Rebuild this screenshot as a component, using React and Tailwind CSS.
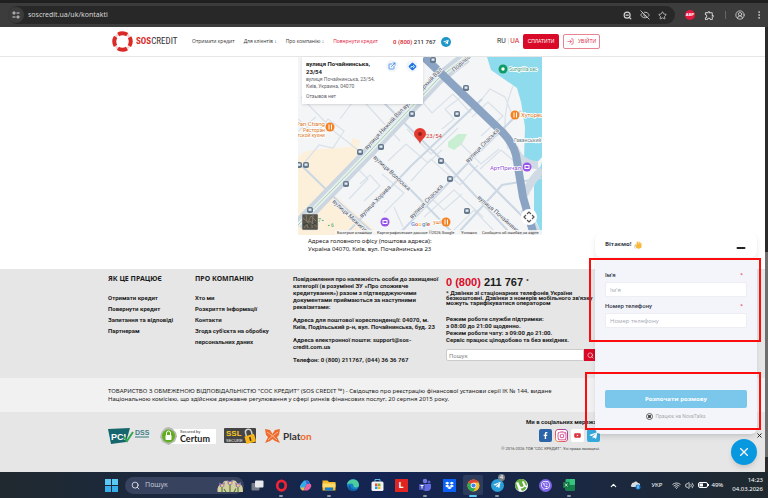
import {
  ChevronUp,
  CircleUserRound,
  EllipsisVertical,
  ExternalLink,
  EyeOff,
  LogIn,
  Minus,
  Search,
  Star,
  Volume2,
  Wifi,
  X,
  ZoomOut,
} from "lucide-react";
import {
  FaDropbox,
  FaFacebookF,
  FaInstagram,
  FaTelegramPlane,
  FaViber,
  FaYoutube,
} from "react-icons/fa";
import { MdOutlineExtension } from "react-icons/md";
import { SiUtorrent } from "react-icons/si";

const howItWorks = [
  "Отримати кредит",
  "Повернути кредит",
  "Запитання та відповіді",
  "Партнерам",
];
const aboutCompany = [
  "Хто ми",
  "Розкриття інформації",
  "Контакти",
  "Згода суб'єкта на обробку персональних даних",
];

const BrowserBar = () => {
  return (
    <div className="flex items-center border-t-3 border-[#202020] bg-[#3c3c3c] pl-2 pr-1 h-[27px] text-[#d5d5d5]">
      <div className="flex flex-1 items-center h-[18px] rounded-full bg-[#282828] pr-2">
        <button
          aria-label="Site settings"
          className="flex items-center justify-center w-4 h-4 rounded-full bg-[#3c3c3c]"
        >
          <svg width="8" height="8" viewBox="0 0 16 16" fill="none" stroke="#d5d5d5" strokeWidth="2">
            <circle cx="4" cy="4" r="2.2" />
            <path d="M9 4h6M1 12h6" />
            <circle cx="12" cy="12" r="2.2" />
          </svg>
        </button>
        <input
          aria-label="Address"
          defaultValue="soscredit.ua/uk/kontakti"
          className="flex-1 min-w-0 ml-1 bg-transparent text-[7px] outline-none font-['Noto_Sans',sans-serif]"
        />
        <div className="flex items-center gap-2">
          <ZoomOut size={9} strokeWidth={3} />
          <EyeOff size={10} />
          <Star size={9} />
        </div>
      </div>
      <div className="flex items-center ml-[10px]">
        <span className="flex items-center justify-center w-[10px] h-[10px] rounded-full bg-[#e8173d] text-white font-bold text-[4px]">
          ABP
        </span>
        <MdOutlineExtension size={11} className="ml-[9px]" />
        <span className="w-px h-2 bg-[#666] ml-[10px]"></span>
        <CircleUserRound size={10} className="ml-[9px]" />
        <EllipsisVertical size={10} className="ml-[9px]" />
      </div>
    </div>
  );
};

const Logo = () => {
  return (
    <a href="#" className="flex items-center gap-[3px] w-[80px]">
      <svg width="21" height="21" viewBox="0 0 42 42" fill="none">
        <circle cx="21" cy="21" r="16.5" stroke="#f3d5d4" strokeWidth="5" />
        <circle
          cx="21"
          cy="21"
          r="16.5"
          stroke="#da2a28"
          strokeWidth="8"
          strokeDasharray="19 6.92"
          strokeDashoffset="9.5"
        />
      </svg>
      <span className="text-[9px] leading-none text-[#333] font-['Liberation_Sans_Narrow','Roboto_Condensed',sans-serif]">
        <b className="text-[#da2a28]">SOS</b>CREDIT
      </span>
    </a>
  );
};

const Header = () => {
  return (
    <header className="flex items-center h-[30px] pl-28 border-b border-[#e6e6e6] bg-white text-[6px] text-[#333] whitespace-nowrap">
      <Logo />
      <nav className="flex items-center justify-between w-[186px] text-[5px] font-medium font-['Open_Sans',sans-serif]">
        <a href="#">Отримати кредит</a>
        <a href="#">Для клієнтів ↓</a>
        <a href="#">Про компанію ↓</a>
        <a href="#" className="text-[#e0203c]">Повернути кредит</a>
      </nav>
      <a href="#" className="ml-[15px] font-medium w-[44px] font-['Roboto',sans-serif]">
        <span className="text-[#d8232a]">0 (800)</span> 211 767
      </a>
      <a
        href="#"
        aria-label="Telegram"
        className="flex items-center justify-center w-[10px] h-[10px] ml-1 rounded-full bg-[#1e96c8] text-white"
      >
        <FaTelegramPlane size={6} />
      </a>
      <div className="ml-[46px] w-[22px] text-[7px] font-['Roboto',sans-serif]">
        <a href="#">RU</a> <span className="text-[#ccc]">|</span>
        <a href="#" className="pl-px text-[#d8232a]">UA</a>
      </div>
      <button className="ml-1 w-9 h-[15px] rounded-xs bg-[#d90a28] text-[5px] font-medium text-white">
        СПЛАТИТИ
      </button>
      <button className="flex items-center justify-center gap-1 ml-1 w-[37px] h-[15px] rounded-xs border border-[#e88490] text-[5px] text-[#d8324a]">
        <LogIn size={7} />
        УВІЙТИ
      </button>
    </header>
  );
};

const stops = [
  [135, 3],
  [168, 31],
  [114, 57],
  [159, 57],
  [83, 90],
  [62, 95],
  [8, 108],
  [1, 108],
  [143, 104],
  [48, 127],
  [152, 122],
  [12, 153],
  [169, 154],
];

const streets = [
  [69, 93, -47, "вулиця Нижній Вал"],
  [107, 53, -47, "вулиця Верхній Вал"],
  [75, 101, 43, "вулиця Волоська"],
  [34, 145, 43, "вулиця Межигірська"],
  [64, 161, -46, "вулиця Хорива"],
  [114, 162, -46, "вулиця Спаська"],
  [170, 106, -46, "вулиця Спаська"],
  [179, 141, 41, "вулиця Почайнинська"],
  [156, 15, -41, "Подільська"],
];

const MapDrawing = () => {
  return (
    <svg
      viewBox="0 0 244 178"
      width="244"
      height="178"
      className="block"
      fontFamily="Roboto, sans-serif"
      fontSize="6"
    >
      <rect width="244" height="178" fill="#f4f5f7" />
      <path d="M0 100L20 84 55 81 62 84 56 108 0 160zM20 154L36 138 82 178H0v-22z" fill="#fcf0da" />
      <path d="M0 60L34 48 56 76 52 90 22 92 0 96z" fill="#f4f5f7" />
      <path d="M150 85l10-8h9l-5 10-8 6-6-3z" fill="#c9efd2" />
      <path d="M189 0l4 13 26 18 4 14 4 25-1 32 9 8 9-10V0z" fill="#8edbee" />
      <path d="M244 105l-8 24v30l8 19z" fill="#8edbee" />
      {/* minor streets */}
      <g fill="none" stroke="#d9e1e9" strokeWidth="1.2">
        <path d="M0 62l17 16 13-16 16 12-11 17-14-3-14 17M3 40l34 35 28 22M0 74l18-14M42 62l18-24 42 46" />
        <path d="M144 72l12-10-9-10 20-15 13 10 12-15 15 8 8 20M174 60l16-15 15 14-22 20M160 84l23 23 18-15M120 40l14 16 21-19 18 19M109 72l24 25 27-26" />
        <path d="M90 104l18-17 22 19 14-13M113 124l20-22 29 26 18-20M84 117l22 19-20 20M126 160l30-27 29 27M58 110l12 12-19 20M96 150l9 20M151 178l25-25 23 24M182 112l21-19 13 11" />
        <path d="M215 29q-13 31-5 63M132 140l14 13 18-16M62 127l10-9 10 11-16 15" />
      </g>
      <g fill="none" stroke="#cbd7e3" strokeWidth="2">
        <path d="M0 105l44 43 34 30M78 38l68 67 66 71M73 96l34 31 47 48M47 178l67-70 70-66M100 178l68-70 55-54M160 176l44-48 40-7M170 105l70 70M106 55l-26 25" />
      </g>
      <path d="M0 168L72 94 140 22 168 0" fill="none" stroke="#cbd6e1" strokeWidth="12" />
      <path d="M0 168L72 94 140 22 168 0" fill="none" stroke="#e9f1ef" strokeWidth="4" />
      <path d="M0 168L72 94 140 22 168 0" fill="none" stroke="#aacdb6" strokeWidth="1" />
      <path d="M216 90q6 18 24 18M225 140q10-20 19-27M226 152l14 26" fill="none" stroke="#d0dae4" strokeWidth="8" />
      <path d="M126 0L200 71q14 12 18 27l7 42 11 38" fill="none" stroke="#8ca4c3" strokeWidth="8" />
      <g fill="#55616f" stroke="#f3f4f6" strokeWidth="1.5" paintOrder="stroke">
        {streets.map(([x, y, r, name], i) => (
          <text key={i} transform={`translate(${x} ${y}) rotate(${r})`}>
            {name}
          </text>
        ))}
      </g>
      {stops.map(([x, y], i) => (
        <g key={i}>
          <rect x={x - 3} y={y - 3} width="6" height="6" rx="1.8" fill="#64798d" />
          <rect x={x - 1.5} y={y - 1.5} width="3" height="2.3" fill="#e5ebf0" />
        </g>
      ))}
      <g stroke="#fff" strokeWidth="1.5" paintOrder="stroke">
        <g fill="#dc7a24">
          <text x="27" y="69" textAnchor="end">Pan Chang</text>
          <text x="27" y="75" fontSize="5" textAnchor="end">Ресторан</text>
          <text x="27" y="80" fontSize="5" textAnchor="end">атской кухни</text>
          <text x="223" y="60">Хуторець</text>
          <text x="143" y="167" fontSize="5" textAnchor="end">уші</text>
        </g>
        <text x="211" y="14" fontSize="5" fill="#3d9c85">Sungrilla sec</text>
        <text x="223" y="113" fill="#9155d6" textAnchor="end">АртПричал</text>
        <text x="216" y="85" fontSize="5" fill="#6e7d88">Гаванський</text>
      </g>
      {[[32, 70], [217, 58], [148, 165]].map(([x, y]) => (
        <g key={x}>
          <circle cx={x} cy={y} r="4.5" fill="#f58220" />
          <path d={`M${x - 1} ${y - 2.5}v5M${x + 1.5} ${y - 2.5}v5`} stroke="#fff" strokeWidth="1" />
        </g>
      ))}
      <circle cx="205" cy="12" r="4.5" fill="#109b64" />
      <circle cx="205" cy="12" r="1.7" fill="#fff" />
      {[[229, 110], [87, 165]].map(([x, y]) => (
        <g key={x}>
          <circle cx={x} cy={y} r="4.5" fill="#9a55e8" />
          <rect x={x - 2} y={y - 1.5} width="4" height="3" fill="none" stroke="#fff" />
        </g>
      ))}
      <path d="M122 87c-1-5-6-6-6-10a6 6 0 0 1 12 0c0 4-5 5-6 10z" fill="#e33b30" />
      <circle cx="122" cy="77" r="2" fill="#98201b" />
      <text x="128" y="81" fill="#d33b31">23/54</text>
      {/* satellite preview */}
      <rect x="4" y="157" width="16" height="16" rx="1" fill="#56534b" stroke="#ddd" strokeWidth="0.5" />
      <path d="M5 161l5 4 3-6 5 5M6 171l6-7 7 6M8 158l2 13M15 158l-1 13" stroke="#867a69" fill="none" />
      <path d="M5 168l4-2 3 4M14 168l4-2" stroke="#344337" fill="none" />
      <text x="113" y="169" fontSize="6" fontWeight="500" stroke="#fff" strokeWidth="1" paintOrder="stroke">
        <tspan fill="#4285f4">G</tspan>
        <tspan fill="#ea4335">o</tspan>
        <tspan fill="#fbbc05">o</tspan>
        <tspan fill="#4285f4">g</tspan>
        <tspan fill="#34a853">l</tspan>
        <tspan fill="#ea4335">e</tspan>
      </text>
      <text x="20" y="165" fontSize="5" fill="#3a9e5c">7 ▪</text>
      <text x="30" y="170" fontSize="5" fill="#3a9e5c">▪ 6</text>
      <circle cx="231" cy="160" r="8" fill="#fff" />
      <path d="M229 157l2-2 2 2M229 163l2 2 2-2M228 158l-2 2 2 2M234 158l2 2-2 2" fill="none" stroke="#555" strokeWidth="1.2" />
      <rect x="37" y="173" width="207" height="5" fill="#f7f7f7" opacity="0.85" />
      <g fontSize="4" fill="#333">
        <text x="39" y="177">Быстрые клавиши</text>
        <text x="79" y="177">Картографические данные ©2026 Google</text>
        <text x="163" y="177">Условия</text>
        <text x="184" y="177">Сообщить об ошибке на карте</text>
      </g>
    </svg>
  );
};

const OfficeMap = () => {
  return (
    <section className="pl-[298px] bg-white">
      <div className="relative w-[244px]">
        <MapDrawing />
        {/* place card over the map */}
        <div className="absolute left-1 top-0 flex w-[121px] h-[47px] bg-white pl-1 pr-[5px] shadow-sm font-['Roboto',sans-serif]">
          <div className="flex-1 min-w-0 text-[5px] leading-[7px] text-[#5f6368] pt-[3px]">
            <p className="text-[6px] leading-2 font-bold text-[#222] whitespace-nowrap">
              вулиця Почайнинська,
              <br />
              23/54
            </p>
            <p className="whitespace-nowrap">
              вулиця Почайнинська, 23/54,
              <br />
              Київ, Украина, 04070
            </p>
            <p className="mt-[3px]">Отзывов нет</p>
          </div>
          <div className="flex gap-2 mt-[3px]">
            <a href="#" aria-label="Open in maps" className="flex items-center justify-center w-3 h-3 rounded-full bg-[#f2f5fa] text-[#1a73e8]">
              <ExternalLink size={8} />
            </a>
            <a href="#" aria-label="Directions" className="flex items-center justify-center w-3 h-3 rounded-full bg-[#f2f5fa]">
              <svg width="9" height="9" viewBox="0 0 18 18">
                <rect x="4" y="4" width="10" height="10" rx="1" transform="rotate(45 9 9)" fill="#1a73e8" stroke="#1a73e8" strokeWidth="2" />
                <path d="M6 12V9h5M10 6l3 3-3 3" fill="none" stroke="#fff" strokeWidth="1.5" />
              </svg>
            </a>
          </div>
        </div>
      </div>
      <p className="pl-[10px] pt-[2px] pb-4 text-[6px] leading-2 text-[#222] font-['Noto_Sans',sans-serif]">
        Адреса головного офісу (поштова адреса):
        <br />
        Україна 04070, Київ, вул. Почайнинська 23
      </p>
    </section>
  );
};

const LinkColumn = ({ title, links }) => {
  return (
    <div className="pt-[5px]">
      <h3 className="text-[7px] leading-[10px] font-bold whitespace-nowrap font-['Noto_Sans',sans-serif]">{title}</h3>
      <ul className="mt-2 leading-[11px]">
        {links.map((link) => (
          <li key={link}>
            <a href="#">{link}</a>
          </li>
        ))}
      </ul>
    </div>
  );
};

const FooterTop = () => {
  return (
    <div className="grid grid-cols-[87px_79px_148px_160px] pl-[108px] h-[109px] bg-[#e6e6e6] text-[6px] font-bold text-[#1c1c1c] font-['Roboto',sans-serif]">
      <LinkColumn title="ЯК ЦЕ ПРАЦЮЄ" links={howItWorks} />
      <LinkColumn title="ПРО КОМПАНІЮ" links={aboutCompany} />
      <div className="flex flex-col gap-[6px] ml-[19px] pt-[6px] leading-[7px] whitespace-nowrap">
        <p>
          Повідомлення про належність особи до захищеної
          <br />
          категорії (в розумінні ЗУ «Про споживче
          <br />
          кредитування») разом з підтверджуючими
          <br />
          документами приймаються за наступними
          <br />
          реквізитами:
        </p>
        <p>
          Адреса для поштової кореспонденції: 04070, м.
          <br />
          Київ, Подільський р-н, вул. Почайнинська, буд. 23
        </p>
        <p>
          Адреса електронної пошти: support@sos-
          <br />
          credit.com.ua
        </p>
        <p>Телефон: 0 (800) 211767, (044) 36 36 767</p>
      </div>
      <div className="ml-6 pt-[6px] whitespace-nowrap">
        <p className="text-[11px] leading-[14px] font-['Liberation_Sans',sans-serif]">
          <span className="text-[#d90a28]">0 (800)</span> 211 767{" "}
          <sup className="text-[6px]">*</sup>
        </p>
        <p className="leading-[5px] mt-px">
          * Дзвінки зі стаціонарних телефонів України
          <br />
          безкоштовні. Дзвінки з номерів мобільного зв'язку
          <br />
          можуть тарифікуватися оператором
        </p>
        <p className="leading-[7px] mt-[10px]">
          Режим роботи служби підтримки:
          <br />
          з 08:00 до 21:00 щоденно.
          <br />
          Режим роботи чату: з 09:00 до 21:00.
          <br />
          Сервіс працює цілодобово та без вихідних.
        </p>
        <form className="flex mt-[6px] w-[151px]">
          <input
            aria-label="Пошук"
            placeholder="Пошук"
            className="flex-1 min-w-0 h-3 rounded-l-xs border border-[#ccc] bg-white px-[2px] text-[6px] font-normal placeholder:text-[#888]"
          />
          <button
            type="button"
            aria-label="Шукати"
            className="flex items-center justify-center w-[13px] h-3 bg-[#d90a28] text-white"
          >
            <Search size={7} />
          </button>
        </form>
      </div>
    </div>
  );
};

const PaymentLogos = () => {
  return (
    <div className="flex items-center gap-2">
      <svg width="44" height="18" viewBox="0 0 44 18">
        <path d="M0 2l22-1-4 14-15 2z" fill="#16676d" />
        <text x="3" y="13" fontSize="9" fontWeight="bold" fill="#fff" fontFamily="Liberation Sans">PCI</text>
        <path d="M16 10l3 4 6-9" stroke="#35a852" strokeWidth="2" fill="none" />
        <text x="27" y="8" fontSize="7" fontWeight="bold" fill="#3f7f86" fontFamily="Liberation Sans">DSS</text>
        <path d="M27 10h14" stroke="#6d9da2" strokeWidth="1.5" />
      </svg>
      <svg width="56" height="18" viewBox="0 0 56 18">
        <rect x="8" y="2" width="48" height="15" rx="1" fill="#fff" />
        <path d="M8.5 0l4 1.500 3.500 4 1 4-2 5-6.500 3.500-6-3-2.500-5 1.500-5 3.500-4z" fill="#b4bab0" />
        <circle cx="8.500" cy="9" r="6.500" fill="#62ad1f" />
        <rect x="5.500" y="8" width="6" height="5" rx="1" fill="#fff" />
        <path d="M6.500 8V6a2 2 0 0 1 4 0v2" stroke="#fff" fill="none" />
        <text x="20" y="6" fontSize="4" fill="#333" fontFamily="Liberation Sans">Secured by</text>
        <text x="20" y="15" fontSize="9" fontWeight="bold" fill="#222" fontFamily="Lato">Certum</text>
      </svg>
      <svg width="32" height="18" viewBox="0 0 32 18">
        <rect y="1" width="32" height="15" rx="1" fill="#454545" />
        <text x="2" y="9" fontSize="8" fontWeight="bold" fill="#f6c928" fontFamily="Liberation Sans">SSL</text>
        <text x="2" y="15" fontSize="4" fill="#eee" fontFamily="Liberation Sans">SECURE</text>
        <g transform="rotate(-15 26 11)">
          <path d="M23 9V5a3 3 0 0 1 6 0v4" stroke="#d0d0d0" strokeWidth="1.500" fill="none" />
          <rect x="21" y="8" width="10" height="8" rx="1" fill="#f8b51b" />
          <path d="M26 10v4" stroke="#443209" strokeWidth="1.500" />
        </g>
      </svg>
      <svg width="52" height="18" viewBox="0 0 52 18">
        <path d="M1 2l5 1 2.500 4L11 3l5-1-1 6-2 2 3 6-5-2-2.500-2L6 14l-5 2 3-6-2-2z" fill="#ee6a2e" />
        <path d="M3 5l5.500 4L14 5M4 13l4.500-4 4.500 4" stroke="#f9b990" fill="none" />
        <text x="19" y="13" fontSize="10" fontWeight="bold" fill="#333" fontFamily="Lato">
          Plat<tspan fill="#f0682c">on</tspan>
        </text>
      </svg>
    </div>
  );
};

const Socials = () => {
  return (
    <div className="mr-[165px] text-right font-['Roboto',sans-serif]">
      <p className="text-[6px] leading-2 font-bold text-[#222]">Ми в соціальних мережах</p>
      <div className="flex justify-end gap-[3px] mt-[3px]">
        <a href="#" aria-label="Facebook" className="flex items-center justify-center size-[13px] rounded-xs bg-[#2c64a8] text-white">
          <FaFacebookF size={7} />
        </a>
        <a href="#" aria-label="Instagram" className="size-[13px] p-px rounded-sm bg-linear-to-tr from-[#f39a2d] via-[#d92c6c] to-[#7a3bbd] text-[#cf2f7c]">
          <span className="flex items-center justify-center size-[11px] rounded-xs bg-white">
            <FaInstagram size={10} />
          </span>
        </a>
        <a href="#" aria-label="YouTube" className="flex items-center justify-center size-[13px] rounded-xs bg-white text-[#d8323a]">
          <FaYoutube size={7} />
        </a>
        <a href="#" aria-label="Telegram" className="flex items-center justify-center size-[13px] rounded-xs bg-[#35a8dc] text-white">
          <FaTelegramPlane size={9} />
        </a>
      </div>
      <p className="mt-1 text-[4px] leading-[5px] text-[#444]">
        © 2016-2026 ТОВ "СОС КРЕДИТ". Усі права захищені.
      </p>
    </div>
  );
};

const ChatWidget = () => {
  return (
    <div className="absolute right-[11px] top-[232px] w-[162px] rounded-md bg-[#f4f5fb] shadow-md overflow-hidden font-['Open_Sans',sans-serif]">
      <div className="flex items-center justify-between h-[25px] px-[10px] rounded-b-md bg-white">
        <h2 className="flex items-center gap-[3px] text-[6px] font-bold text-[#333a48]">
          Вітаємо!
          <svg width="8" height="8" viewBox="0 0 16 16">
            <path d="M5 14c-3-2-2-5-3-7l2-1 2 2-1-6 2-1 2 5V1l2 0 1 6 1-4 2 1v8c-1 3-6 5-10 2z" fill="#f8b83c" />
            <path d="M0 8c0 3 1 5 3 7" stroke="#6fa6c9" fill="none" />
          </svg>
        </h2>
        <button aria-label="Згорнути" className="pt-[6px] text-[#222]">
          <Minus size={12} strokeWidth={4} />
        </button>
      </div>
      <form className="px-[10px] pt-[14px] text-[6px]">
        <label htmlFor="name" className="flex justify-between leading-2 font-medium text-[#333a48] pr-1 font-['Roboto',sans-serif]">
          Ім'я <span className="text-[#e8474f]">*</span>
        </label>
        <input
          id="name"
          placeholder="Ім'я"
          className="block w-full h-[15px] mt-[3px] rounded-xs border border-[#eceef4] bg-white px-1 placeholder:text-[#a4a9b5]"
        />
        <label htmlFor="phone" className="flex justify-between mt-[5px] leading-2 font-medium text-[#333a48] pr-1 font-['Roboto',sans-serif]">
          Номер телефону <span className="text-[#e8474f]">*</span>
        </label>
        <input
          id="phone"
          placeholder="Номер телефону"
          className="block w-full h-[15px] mt-[3px] rounded-xs border border-[#eceef4] bg-white px-1 placeholder:text-[#a4a9b5]"
        />
        <button
          type="button"
          className="block w-full h-[18px] mt-[62px] rounded-xs bg-[#7ac7eb] text-[6px] font-bold text-white"
        >
          Розпочати розмову
        </button>
        <p className="flex items-center justify-center gap-[2px] mt-1 mb-[14px] leading-2 text-[5px] text-[#aaa] font-['Roboto',sans-serif]">
          <svg width="7" height="7" viewBox="0 0 14 14" fill="none" stroke="#333" strokeWidth="1.5">
            <circle cx="7" cy="7" r="6" />
            <circle cx="7" cy="7" r="2" fill="#333" />
            <path d="M4 4l6 6M10 4l-6 6" />
          </svg>
          Працює на NovaTalks
        </p>
      </form>
    </div>
  );
};

const TaskIcon = ({ children, running, active }) => {
  return (
    <button className="relative flex items-center justify-center w-6 h-6">
      {children}
      {running && <span className="absolute bottom-0 w-1 h-[2px] rounded-full bg-[#8b93a1]"></span>}
      {active && <span className="absolute bottom-0 w-2 h-[2px] rounded-full bg-[#5cc3f2]"></span>}
    </button>
  );
};

const Taskbar = () => {
  return (
    <footer className="flex items-center h-[26px] pl-[105px] pr-[5px] bg-linear-to-r from-[#20292f] via-[#142453] to-[#20292f] text-white font-['Noto_Sans',sans-serif]">
      <button aria-label="Start" className="grid grid-cols-2 gap-px w-[13px]">
        <span className="size-[6px] bg-[#5ac8f5]"></span>
        <span className="size-[6px] bg-[#5ac8f5]"></span>
        <span className="size-[6px] bg-[#35aeea]"></span>
        <span className="size-[6px] bg-[#35aeea]"></span>
      </button>
      <label className="flex items-center w-[119px] h-[17px] ml-[7px] pl-[6px] rounded-full bg-[#37425e]">
        <Search size={9} />
        <input
          placeholder="Пошук"
          aria-label="Пошук"
          className="flex-1 min-w-0 ml-[5px] text-[7px] placeholder:text-[#c0c6d4]"
        />
        <svg width="28" height="15" viewBox="0 0 56 30">
          <path d="M3 28Q2 12 13 12 16 1 27 8 38 0 43 11q12 0 11 17z" fill="#d6d0a1" />
          <path d="M12 28V15M28 28V11M44 28V15M20 28l-4-6M36 28l4-7" stroke="#568444" strokeWidth="2.500" />
          <path d="M6 9l6 3 6-4-2 10H8zM22 4l6 3 6-4-2 10h-8zM38 9l6 3 6-4-2 10h-8z" fill="#9877c2" />
          <path d="M10 13h5v4h-5zM26 8h5v4h-5zM42 13h5v4h-5z" fill="#f1d469" />
        </svg>
      </label>
      <div className="flex items-center ml-[1px]">
        <TaskIcon>
          <svg width="13" height="13" viewBox="0 0 26 26">
            <rect x="1" y="8" width="16" height="15" rx="2" fill="#777d86" />
            <rect x="8" y="3" width="17" height="14" rx="2" fill="#e8e9eb" />
          </svg>
        </TaskIcon>
        <TaskIcon running>
          <svg width="13" height="13" viewBox="0 0 26 26">
            <ellipse cx="13" cy="13" rx="8.500" ry="9.500" fill="none" stroke="#ef2334" strokeWidth="5.500" />
          </svg>
        </TaskIcon>
        <TaskIcon>
          <svg width="13" height="13" viewBox="0 0 26 26">
            <path d="M10 3h7q3 0 4 4l1 3-7 1-5 11H7q-4 0-5-4t2-8 6-7z" fill="#36a9e8" />
            <path d="M16 9h5q5 1 3 7t-7 7H9l3-6z" fill="#e65f9e" />
            <path d="M3 17h8l-2 6H6z" fill="#f5b93e" />
            <path d="M14 3h4l3 7h-6z" fill="#375fd7" />
          </svg>
        </TaskIcon>
        <TaskIcon running>
          <svg width="14" height="13" viewBox="0 0 28 26">
            <path d="M1 3h10l3 3h13v17H1z" fill="#f5b92e" />
            <path d="M1 9h26v8H1z" fill="#ffda69" />
            <path d="M6 17h16v6H6z" fill="#167dd0" />
          </svg>
        </TaskIcon>
        <TaskIcon>
          <svg width="14" height="14" viewBox="0 0 28 28">
            <circle cx="14" cy="14" r="12" fill="#1581cb" />
            <path d="M2 13C4 0 25-1 26 14q0 5-7 5-5 0-4-4Q15 8 2 13z" fill="#4bcd9d" />
            <path d="M9 14q-2 10 14 9-8 6-16 1-5-8 2-10z" fill="#0e5ba2" />
          </svg>
        </TaskIcon>
        <TaskIcon>
          <svg width="13" height="14" viewBox="0 0 26 28">
            <path d="M8 7V3h10v4" stroke="#5dbbe9" strokeWidth="2" fill="none" />
            <rect x="1" y="7" width="24" height="19" rx="3" fill="#f0f2f5" />
            <path d="M8 11h5v5H8z" fill="#eb5138" />
            <path d="M14 11h5v5h-5z" fill="#7ab43c" />
            <path d="M8 17h5v5H8z" fill="#289bdc" />
            <path d="M14 17h5v5h-5z" fill="#f5b825" />
          </svg>
        </TaskIcon>
        <TaskIcon>
          <span className="flex items-center justify-center size-[13px] bg-[#df2422] text-[9px] font-bold">L</span>
        </TaskIcon>
        <TaskIcon running>
          <svg width="14" height="14" viewBox="0 0 28 28">
            <circle cx="14" cy="6" r="4.500" fill="#7378df" />
            <circle cx="22" cy="8" r="3" fill="#5b63ce" />
            <path d="M7 12h19v8q-2 7-9 6-9 0-10-8z" fill="#646de0" />
            <rect x="2" y="12" width="12" height="12" rx="2" fill="#4750b9" />
            <path d="M5 15h6M8 15v6" stroke="#fff" strokeWidth="2" />
          </svg>
        </TaskIcon>
        <TaskIcon>
          <span className="flex items-center justify-center size-[13px] bg-[#0b61f6]">
            <FaDropbox size={9} />
          </span>
        </TaskIcon>
        <TaskIcon active>
          <span className="flex items-center justify-center size-5 rounded-xs bg-white/10">
            <svg width="13" height="13" viewBox="0 0 28 28">
              <circle cx="14" cy="14" r="13" fill="#f5c02c" />
              <path d="M14 14L2.700 7.500A13 13 0 0 1 25.300 7.500H14z" fill="#e04335" />
              <path d="M14 14L2.700 7.500A13 13 0 0 0 14 27l5-10z" fill="#30a653" />
              <circle cx="14" cy="14" r="6" fill="#fff" />
              <circle cx="14" cy="14" r="4.500" fill="#4083ed" />
            </svg>
          </span>
        </TaskIcon>
        <TaskIcon running>
          <span className="flex items-center justify-center size-[13px] rounded-full bg-[#2a9fd8]">
            <FaTelegramPlane size={8} />
          </span>
          <span className="absolute top-px right-1 flex items-center justify-center size-[7px] rounded-full bg-[#7d858b] text-[6px]">4</span>
        </TaskIcon>
        <TaskIcon>
          <span className="flex items-center justify-center size-[13px] rounded-full bg-white text-[#62ad3d]">
            <SiUtorrent size={12} />
          </span>
        </TaskIcon>
        <TaskIcon>
          <span className="flex items-center justify-center size-[13px] rounded-full bg-[#7c62e8]">
            <FaViber size={9} />
          </span>
        </TaskIcon>
        <TaskIcon running>
          <svg width="14" height="14" viewBox="0 0 28 28">
            <rect x="7" y="2" width="19" height="23" rx="2" fill="#2bb673" />
            <path d="M16 2h8q2 0 2 2v9H16z" fill="#38c481" />
            <path d="M7 14h19v9q0 2-2 2H7z" fill="#15804a" />
            <rect x="2" y="8" width="13" height="12" rx="1" fill="#117642" />
            <path d="M6 11l5 6M11 11l-5 6" stroke="#fff" strokeWidth="1.500" />
          </svg>
        </TaskIcon>
      </div>
      <div className="flex items-center ml-auto text-[6px]">
        <ChevronUp size={9} strokeWidth={3} />
        <svg width="11" height="10" viewBox="0 0 22 20" className="ml-3">
          <path d="M4 14Q0 12 3 9q0-4 5-4 4-4 8 1 5 0 4 5l-3 3z" fill="#d7dce0" />
          <circle cx="16" cy="14" r="5" fill="#1683d8" />
          <path d="M16 12v5M16 10v1" stroke="#fff" strokeWidth="1.500" />
        </svg>
        <span className="ml-[10px]">УКР</span>
        <Wifi size={9} className="ml-[10px]" />
        <Volume2 size={9} className="ml-1" />
        <svg width="11" height="8" viewBox="0 0 22 16" className="ml-1">
          <rect x="1" y="3" width="18" height="10" rx="3" fill="none" stroke="#fff" strokeWidth="2" />
          <path d="M3 5h7v6H3zM20 6h2v4h-2z" fill="#fff" />
        </svg>
        <span className="ml-[2px]">49%</span>
        <div className="ml-[9px] leading-[9px] text-right">
          14:23
          <br />
          04.03.2026
        </div>
      </div>
    </footer>
  );
};

const App = () => {
  return (
    <div className="relative flex flex-col min-h-screen bg-[#e6e6e6] font-['Liberation_Sans',Arial,sans-serif]">
      <BrowserBar />
      <div className="flex flex-1">
        <main className="flex flex-col flex-1 min-w-0">
          <Header />
          <OfficeMap />
          <FooterTop />
          <div className="h-[34px] pl-[108px] pt-[9px] bg-[#f1f1f1] text-[6px] leading-2 text-[#222] whitespace-nowrap overflow-hidden font-['Noto_Sans',sans-serif]">
            ТОВАРИСТВО З ОБМЕЖЕНОЮ ВІДПОВІДАЛЬНІСТЮ "СОС КРЕДИТ" (SOS CREDIT ™) - Свідоцтво про реєстрацію фінансової установи серії ІК № 144, видане
            <br />
            Національною комісією, що здійснює державне регулювання у сфері ринків фінансових послуг, 20 серпня 2015 року.
          </div>
          <div className="flex justify-between pl-[108px] pt-[6px] flex-1">
            <div className="pt-[9px]">
              <PaymentLogos />
            </div>
            <Socials />
          </div>
        </main>
        <div className="w-[3px] bg-[#2b2b2b] pt-[225px]">
          <div className="h-[205px] bg-[#6e6e6e]"></div>
        </div>
      </div>
      <Taskbar />

      <ChatWidget />
      {/* highlighted areas of the chat form */}
      <div className="absolute right-[7px] top-[258px] w-[172px] h-[84px] border-2 border-[#fb0d0d] pointer-events-none"></div>
      <div className="absolute right-[7px] top-[372px] w-[176px] h-[58px] border-2 border-[#fb0d0d] pointer-events-none"></div>
      <button aria-label="Закрити" className="absolute right-[5px] top-[432px] text-[#111]">
        <X size={7} strokeWidth={3} />
      </button>
      <button
        aria-label="Закрити чат"
        className="absolute right-[11px] top-[439px] flex items-center justify-center size-[26px] rounded-full bg-[#0798e0] text-white shadow-md"
      >
        <X size={14} strokeWidth={2} />
      </button>
    </div>
  );
};
export default App;
